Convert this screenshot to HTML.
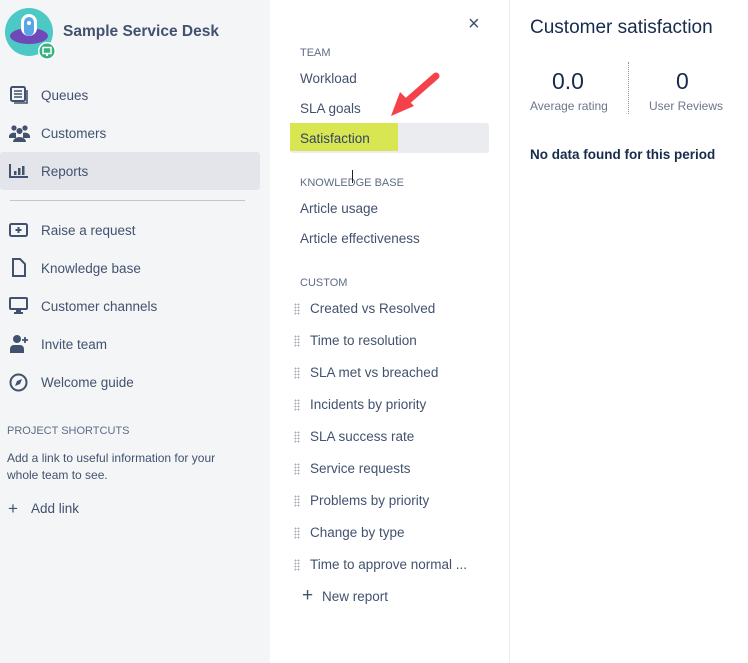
<!DOCTYPE html>
<html><head><style>
*{margin:0;padding:0;box-sizing:border-box}
body{width:748px;height:663px;overflow:hidden;font-family:"Liberation Sans",sans-serif;color:#42526e;background:#fff;position:relative;font-size:13.5px}
.abs{position:absolute;white-space:nowrap}
#left{position:absolute;left:0;top:0;width:270px;height:663px;background:#f4f5f7}
#mid{position:absolute;left:270px;top:0;width:240px;height:663px;background:#fff;border-right:1px solid #ebecf0}
.ni{position:absolute;left:41px;font-size:13.5px;color:#42526e}
.ic{position:absolute;left:9px}
.hd{font-size:11px;color:#5e6c84;text-transform:uppercase}
.mi{position:absolute;left:30px;font-size:13.5px;color:#42526e;white-space:nowrap}
.ci{position:absolute;left:40px;font-size:13.5px;color:#42526e;white-space:nowrap}
.grip{position:absolute;left:24px;width:6px;height:12px;background-image:radial-gradient(circle,#a5adba 0.9px,transparent 1px);background-size:3px 3px}
</style></head><body>
<div id="left">
 <svg class="abs" style="left:5px;top:8px" width="52" height="52" viewBox="0 0 52 52">
  <circle cx="24" cy="24" r="24" fill="#4cc9c4"/>
  <ellipse cx="24" cy="28" rx="19" ry="8" fill="#6f49b8"/>
  <rect x="16" y="6" width="16" height="22" rx="8" fill="#fff"/>
  <rect x="19" y="9" width="10" height="19" rx="5" fill="#5aa4e8"/>
  <circle cx="24" cy="15" r="2" fill="#fff"/>
  <circle cx="42" cy="43" r="9" fill="#fff"/>
  <circle cx="42" cy="43" r="7.5" fill="#36b37e"/>
  <rect x="38" y="39.5" width="8" height="6" fill="none" stroke="#fff" stroke-width="1.5"/>
  <rect x="41" y="46" width="2" height="2" fill="#fff"/>
 </svg>
 <div class="abs" style="left:63px;top:23px;font-size:15.5px;font-weight:bold;color:#42526e">Sample Service Desk</div>
 <svg class="ic" style="top:86px" width="20" height="18" viewBox="0 0 20 18"><rect x="2" y="1" width="14" height="14" rx="1.5" fill="none" stroke="#42526e" stroke-width="2"/><path d="M5 5h8M5 8h8M5 11h8" stroke="#42526e" stroke-width="1.6"/><path d="M18 4v13H5" fill="none" stroke="#42526e" stroke-width="1.6"/></svg>
 <div class="ni" style="top:88px">Queues</div>
 <svg class="ic" style="top:124px" width="22" height="18" viewBox="0 0 22 18"><circle cx="5" cy="4" r="2.6" fill="#42526e"/><circle cx="16" cy="4" r="2.6" fill="#42526e"/><circle cx="10.5" cy="7" r="3" fill="#42526e"/><path d="M0 12a5 4 0 0 1 7-3v5H0zM21 12a5 4 0 0 0-7-3v5h7z" fill="#42526e"/><path d="M4 18a6.5 5 0 0 1 13 0z" fill="#42526e"/></svg>
 <div class="ni" style="top:126px">Customers</div>
 <div class="abs" style="left:0;top:152px;width:260px;height:38px;background:#e4e5ea;border-radius:3px"></div>
 <svg class="ic" style="top:163px" width="20" height="16" viewBox="0 0 20 16"><path d="M1 1v13h18" fill="none" stroke="#42526e" stroke-width="2"/><rect x="5" y="8" width="2.5" height="4" fill="#42526e"/><rect x="9" y="5" width="2.5" height="7" fill="#42526e"/><rect x="13" y="3" width="2.5" height="9" fill="#42526e"/></svg>
 <div class="ni" style="top:164px">Reports</div>
 <div class="abs" style="left:10px;top:200px;width:235px;height:1px;background:#c1c7d0"></div>
 <svg class="ic" style="top:223px" width="20" height="14" viewBox="0 0 20 14"><rect x="1" y="1" width="17" height="12" rx="1.5" fill="none" stroke="#42526e" stroke-width="2"/><path d="M9.5 4v6M6.5 7h6" stroke="#42526e" stroke-width="2"/></svg>
 <div class="ni" style="top:223px">Raise a request</div>
 <svg class="ic" style="top:258px;left:11px" width="16" height="20" viewBox="0 0 16 20"><path d="M2 1h7l5 5v12H2z" fill="none" stroke="#42526e" stroke-width="2"/></svg>
 <div class="ni" style="top:261px">Knowledge base</div>
 <svg class="ic" style="top:297px" width="20" height="18" viewBox="0 0 20 18"><rect x="1" y="1" width="17" height="11" rx="1" fill="none" stroke="#42526e" stroke-width="2"/><rect x="7" y="12" width="5" height="3" fill="#42526e"/><rect x="5" y="15" width="9" height="2" fill="#42526e"/></svg>
 <div class="ni" style="top:299px">Customer channels</div>
 <svg class="ic" style="top:334px" width="20" height="20" viewBox="0 0 20 20"><circle cx="8" cy="5" r="4" fill="#42526e"/><path d="M1 19v-4a4 4 0 0 1 4-4h6a4 4 0 0 1 4 4v4z" fill="#42526e"/><path d="M16 3v6M13 6h6" stroke="#42526e" stroke-width="1.8"/></svg>
 <div class="ni" style="top:337px">Invite team</div>
 <svg class="ic" style="top:373px" width="20" height="20" viewBox="0 0 20 20"><circle cx="9.5" cy="9.5" r="8" fill="none" stroke="#42526e" stroke-width="2"/><path d="M13 6l-2 5-5 2 2-5z" fill="#42526e"/></svg>
 <div class="ni" style="top:375px">Welcome guide</div>
 <div class="abs hd" style="left:7px;top:425px">Project shortcuts</div>
 <div class="abs" style="left:7px;top:450px;font-size:12px;line-height:17px;color:#42526e;white-space:normal;width:230px">Add a link to useful information for your whole team to see.</div>
 <div class="abs" style="left:8px;top:499px;font-size:17px;color:#42526e">+</div>
 <div class="ni" style="top:501px;left:31px">Add link</div>
</div>
<div id="mid">
 <div class="abs" style="left:198px;top:13px;font-size:20px;color:#42526e">×</div>
 <div class="abs hd" style="left:30px;top:47px">Team</div>
 <div class="mi" style="top:71px">Workload</div>
 <div class="mi" style="top:101px">SLA goals</div>
 <div class="abs" style="left:20px;top:123px;width:199px;height:30px;background:#ebecf0;border-radius:3px"></div>
 <div class="abs" style="left:20px;top:123px;width:108px;height:28px;background:#d8e652"></div>
 <div class="mi" style="top:131px;color:#344563">Satisfaction</div>
 <div class="abs hd" style="left:30px;top:177px">Knowledge base</div>
 <div class="abs" style="left:82px;top:170px;width:1px;height:13px;background:#222"></div>
 <div class="mi" style="top:201px">Article usage</div>
 <div class="mi" style="top:231px">Article effectiveness</div>
 <div class="abs hd" style="left:30px;top:277px">Custom</div>
 <div class="grip" style="top:303px"></div><div class="ci" style="top:301px">Created vs Resolved</div>
 <div class="grip" style="top:335px"></div><div class="ci" style="top:333px">Time to resolution</div>
 <div class="grip" style="top:367px"></div><div class="ci" style="top:365px">SLA met vs breached</div>
 <div class="grip" style="top:399px"></div><div class="ci" style="top:397px">Incidents by priority</div>
 <div class="grip" style="top:431px"></div><div class="ci" style="top:429px">SLA success rate</div>
 <div class="grip" style="top:463px"></div><div class="ci" style="top:461px">Service requests</div>
 <div class="grip" style="top:495px"></div><div class="ci" style="top:493px">Problems by priority</div>
 <div class="grip" style="top:527px"></div><div class="ci" style="top:525px">Change by type</div>
 <div class="grip" style="top:559px"></div><div class="ci" style="top:557px">Time to approve normal ...</div>
 <div class="abs" style="left:32px;top:585px;font-size:19px;color:#42526e">+</div>
 <div class="abs" style="left:52px;top:589px;font-size:13.5px">New report</div>
 <svg class="abs" style="left:118px;top:70px" width="56" height="50" viewBox="0 0 56 50"><path d="M48 6L16 34" stroke="#f4414a" stroke-width="7" stroke-linecap="round"/><path d="M3 46l9-24 14 14z" fill="#f4414a"/></svg>
</div>
<div class="abs" style="left:530px;top:17px;font-size:19px;color:#172b4d">Customer satisfaction</div>
<div class="abs" style="left:552px;top:68px;font-size:23px;color:#172b4d">0.0</div>
<div class="abs" style="left:530px;top:99px;font-size:12px;color:#6b778c">Average rating</div>
<div class="abs" style="left:628px;top:62px;height:52px;border-left:1px dotted #8993a4"></div>
<div class="abs" style="left:676px;top:68px;font-size:23px;color:#172b4d">0</div>
<div class="abs" style="left:649px;top:99px;font-size:12px;color:#6b778c">User Reviews</div>
<div class="abs" style="left:530px;top:147px;font-size:13.5px;font-weight:bold;color:#172b4d">No data found for this period</div>
</body></html>
